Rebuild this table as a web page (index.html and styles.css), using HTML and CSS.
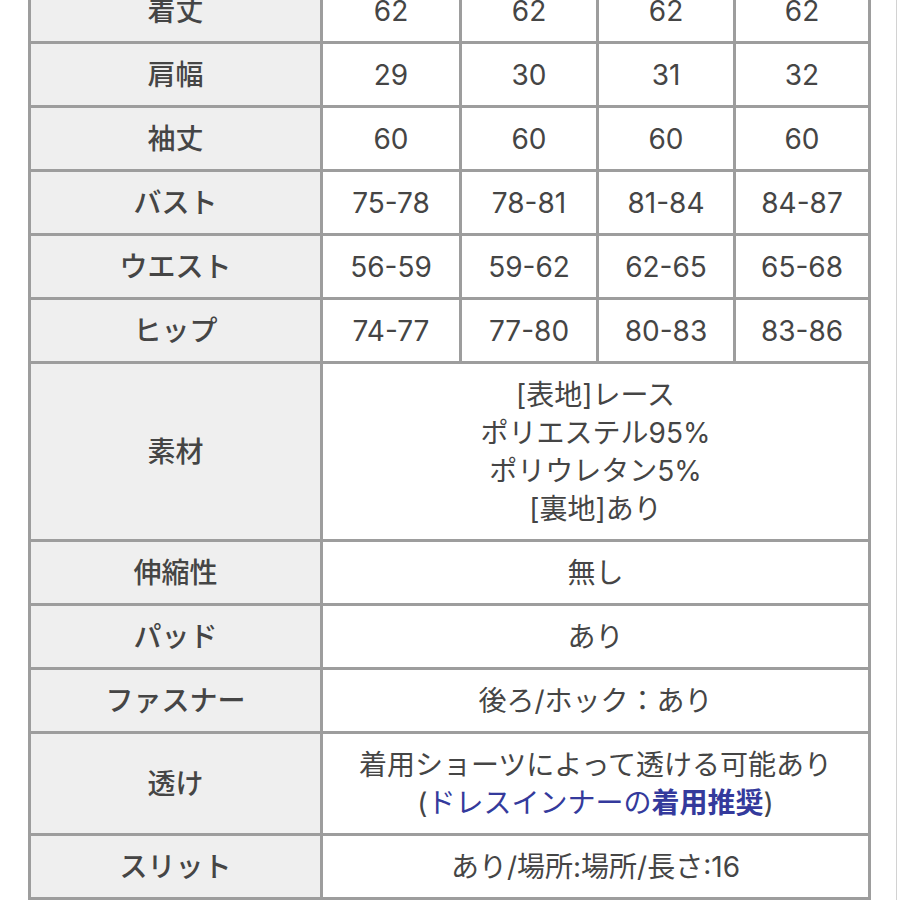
FILE: index.html
```html
<!DOCTYPE html>
<html lang="ja">
<head>
<meta charset="utf-8">
<title>サイズ表</title>
<link rel="stylesheet" href="styles.css">
</head>
<body>
<div class="page">
  <div class="spec">
    <div class="cell label"><span class="jp">着丈</span></div>
    <div class="cell">62</div><div class="cell">62</div><div class="cell">62</div><div class="cell">62</div>

    <div class="cell label"><span class="jp">肩幅</span></div>
    <div class="cell">29</div><div class="cell">30</div><div class="cell">31</div><div class="cell">32</div>

    <div class="cell label"><span class="jp">袖丈</span></div>
    <div class="cell">60</div><div class="cell">60</div><div class="cell">60</div><div class="cell">60</div>

    <div class="cell label"><span class="jp">バスト</span></div>
    <div class="cell">75-78</div><div class="cell">78-81</div><div class="cell">81-84</div><div class="cell">84-87</div>

    <div class="cell label"><span class="jp">ウエスト</span></div>
    <div class="cell">56-59</div><div class="cell">59-62</div><div class="cell">62-65</div><div class="cell">65-68</div>

    <div class="cell label"><span class="jp">ヒップ</span></div>
    <div class="cell">74-77</div><div class="cell">77-80</div><div class="cell">80-83</div><div class="cell">83-86</div>

    <div class="cell label"><span class="jp">素材</span></div>
    <div class="cell wide"><p class="txt">[表地]レース<br>ポリエステル95%<br>ポリウレタン5%<br>[裏地]あり</p></div>

    <div class="cell label"><span class="jp">伸縮性</span></div>
    <div class="cell wide"><p class="txt">無し</p></div>

    <div class="cell label"><span class="jp">パッド</span></div>
    <div class="cell wide"><p class="txt">あり</p></div>

    <div class="cell label"><span class="jp">ファスナー</span></div>
    <div class="cell wide"><p class="txt">後ろ/ホック：あり</p></div>

    <div class="cell label"><span class="jp">透け</span></div>
    <div class="cell wide"><p class="txt">着用ショーツによって透ける可能あり<br>(<span class="note">ドレスインナーの<b>着用推奨</b></span>)</p></div>

    <div class="cell label"><span class="jp">スリット</span></div>
    <div class="cell wide"><p class="txt">あり/場所:場所/長さ:16</p></div>

    <div class="cell label"></div>
    <div class="cell wide"></div>
  </div>
</div>
</body>
</html>
```

FILE: styles.css
```css
html, body {
  margin: 0;
  padding: 0;
  background: #ffffff;
}

body {
  font-family: "Inter", "Noto Sans CJK JP", sans-serif;
  font-size: 28px;
  font-weight: 400;
  color: #454545;
  overflow: hidden;
}

.page {
  width: 896px;
  height: 900px;
  border-right: 1px solid #d2d2d2;
  overflow: hidden;
}

.spec {
  margin-top: -23px;
  margin-left: 28px;
  width: max-content;
  display: grid;
  grid-template-columns: 289px 136px 134px 134px 132px;
  grid-template-rows: 61px 61px 61px 61px 61px 61px 175px 61px 61px 61px 99px 61px 61px;
  gap: 3px;
  padding: 3px;
  background: #9d9d9d;
}

.cell {
  background: #ffffff;
  display: flex;
  align-items: center;
  justify-content: center;
  text-align: center;
  line-height: 38px;
}

.label {
  background: #efefef;
}

.jp {
  font-weight: 500;
}

.txt {
  margin: 0;
}

.wide {
  grid-column: 2 / 6;
}

.note {
  color: #343a9c;
}

.note b {
  font-weight: 700;
}
```
